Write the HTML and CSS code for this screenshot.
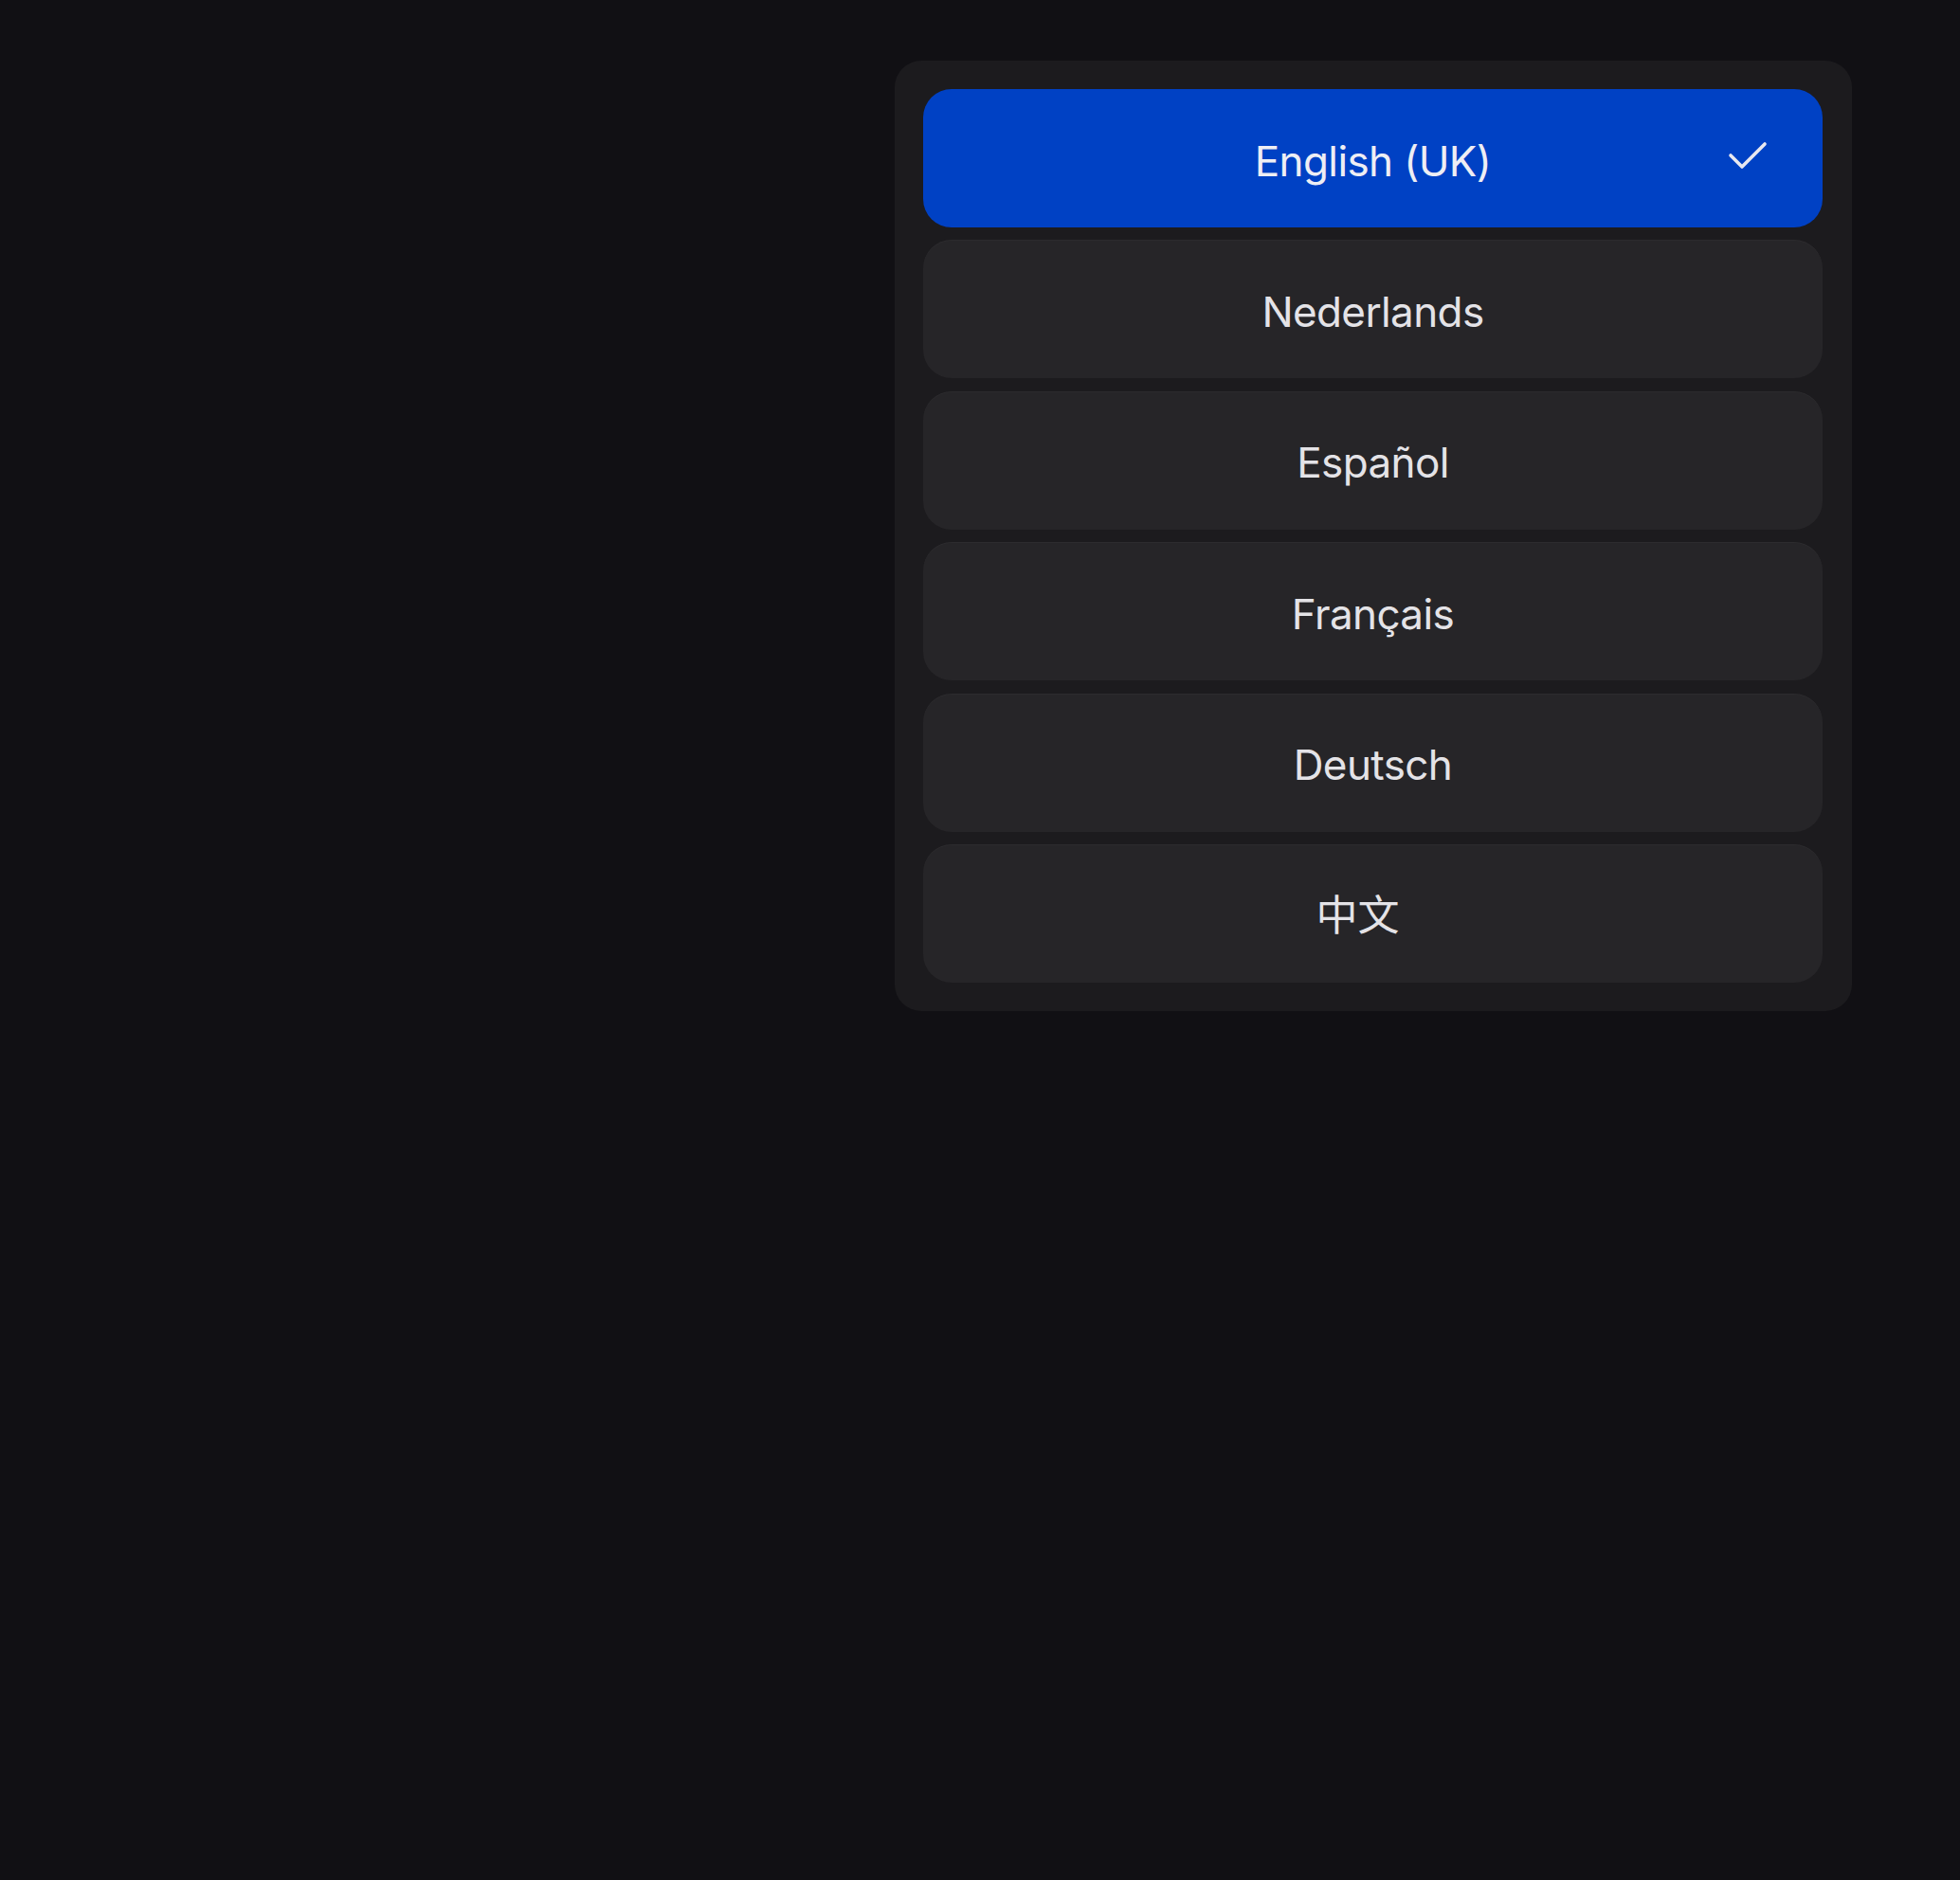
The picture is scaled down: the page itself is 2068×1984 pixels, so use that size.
FILE: index.html
```html
<!DOCTYPE html>
<html>

<head>
    <meta charset="utf-8">
    <title>Language</title>
    <link rel="stylesheet" href="styles.css">
</head>

<body>

    <div class="lang-menu">
        <div class="lang-option selected">
            <span>English (UK)</span>
            <svg class="check" width="44" height="36" viewBox="0 0 44 36">
                <path d="M4 15 L16 27 L40 3" />
            </svg>
        </div>
        <div class="lang-option"><span>Nederlands</span></div>
        <div class="lang-option"><span>Español</span></div>
        <div class="lang-option"><span>Français</span></div>
        <div class="lang-option"><span>Deutsch</span></div>
        <div class="lang-option cjk"><span>中文</span></div>
    </div>

</body>

</html>
```

FILE: styles.css
```css
body {
    margin: 0;
    background-color: #111014;
    font-family: "Inter", "Noto Sans CJK SC", sans-serif;
    min-height: 1984px;
}

.lang-menu {
    box-sizing: border-box;
    width: 1010px;
    margin: 64px 0 0 944px;
    padding: 30px 31px 30px 30px;
    display: flex;
    flex-direction: column;
    gap: 13.4px;
    background-color: #1c1b1e;
    border-radius: 28px;
}

.lang-option {
    box-sizing: border-box;
    position: relative;
    height: 146px;
    padding-top: 5px;
    display: flex;
    align-items: center;
    justify-content: center;
    background-color: #262528;
    border-radius: 30px;
    box-shadow: inset 0 1px 0 rgba(255, 255, 255, 0.03);
    color: #e4e3e7;
    font-size: 44px;
    letter-spacing: -0.6px;
    line-height: 1;
}

.lang-option.selected {
    background-color: #0041c4;
    box-shadow: none;
    color: #eeeef4;
}

.lang-option.cjk {
    padding-right: 32px;
    letter-spacing: 0;
}

/* tick on the selected row */
.check {
    position: absolute;
    right: 57px;
    top: 55px;
}

.check path {
    fill: none;
    stroke: #e8e8f0;
    stroke-width: 3.6;
    stroke-linecap: round;
    stroke-linejoin: round;
}
```
